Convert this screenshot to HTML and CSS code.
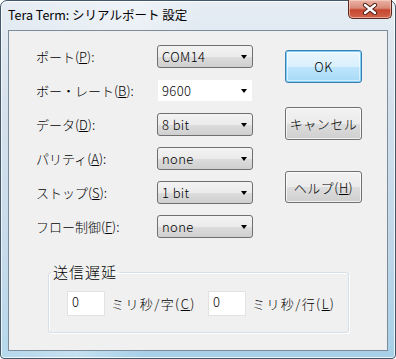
FILE: index.html
```html
<!DOCTYPE html>
<html lang="ja">
<head>
<meta charset="utf-8">
<title>Tera Term: シリアルポート 設定</title>
<link rel="stylesheet" href="styles.css">
</head>
<body>
<div class="window">
  <div class="titlebar">
    <span class="title">Tera Term: シリアルポート 設定</span>
    <div class="close">
      <svg width="16" height="12" viewBox="0 0 16 12">
        <path d="M3 2 L13 10 M13 2 L3 10" stroke="#4a1b12" stroke-width="4.2" stroke-linecap="round"/>
        <path d="M3 2 L13 10 M13 2 L3 10" stroke="#ffffff" stroke-width="2.4" stroke-linecap="round"/>
      </svg>
    </div>
  </div>
  <div class="client">
    <div class="main">
      <div class="form">
        <span class="label">ポート(<u>P</u>):</span>
        <div class="combo"><span>COM14</span><i class="arrow"></i></div>
        <span class="label">ボー・レート(<u>B</u>):</span>
        <div class="combo edit"><span>9600</span><i class="arrow"></i></div>
        <span class="label">データ(<u>D</u>):</span>
        <div class="combo"><span>8 bit</span><i class="arrow"></i></div>
        <span class="label">パリティ(<u>A</u>):</span>
        <div class="combo"><span>none</span><i class="arrow"></i></div>
        <span class="label">ストップ(<u>S</u>):</span>
        <div class="combo"><span>1 bit</span><i class="arrow"></i></div>
        <span class="label">フロー制御(<u>F</u>):</span>
        <div class="combo"><span>none</span><i class="arrow"></i></div>
      </div>
      <div class="buttons">
        <button class="btn default ok">OK</button>
        <button class="btn cancel">キャンセル</button>
        <button class="btn help">ヘルプ(<u>H</u>)</button>
      </div>
    </div>
    <fieldset class="group">
      <legend>送信遅延</legend>
      <div class="delay">
        <div class="field">0</div>
        <span class="unit unit-char">ミリ秒/字(<u>C</u>)</span>
        <div class="field">0</div>
        <span class="unit">ミリ秒/行(<u>L</u>)</span>
      </div>
    </fieldset>
  </div>
</div>
</body>
</html>
```

FILE: styles.css
```css
* { box-sizing: border-box; }
html, body { margin: 0; padding: 0; background: #ffffff; }
body {
  font-family: "Noto Sans CJK JP", "Noto Sans", sans-serif;
  font-size: 13px;
  font-weight: 300;
  color: #000;
}
.window {
  width: 396px;
  height: 359px;
  border: 1px solid #44586b;
  border-radius: 7px 7px 4px 4px;
  background:
    linear-gradient(100deg, rgba(255,255,255,0) 0%, rgba(255,255,255,.35) 30%, rgba(255,255,255,0) 45%),
    linear-gradient(180deg, #e6edf4 0%, #d3e0ec 30%, #bfd6e8 70%, #a6d0e8 100%);
  box-shadow: inset 0 0 0 1px rgba(255,255,255,.75);
  padding: 0 7px 7px;
  display: flex;
  flex-direction: column;
}
.titlebar {
  height: 29px;
  display: flex;
  justify-content: space-between;
  align-items: flex-start;
}
.title {
  font-size: 12.5px;
  line-height: 13px;
  margin-top: 7px;
  font-weight: 400;
  color: #000;
}
.close {
  width: 44px;
  height: 19px;
  margin-right: -4px;
  margin-top: -1px;
  border: 1px solid #5a2a22;
  border-top: none;
  border-radius: 0 0 5px 5px;
  background: linear-gradient(180deg, #eab2a6 0%, #d98a78 45%, #c7462f 55%, #d0654c 100%);
  box-shadow: inset 0 0 0 1px rgba(255,220,210,.55);
  display: flex;
  align-items: center;
  justify-content: center;
}
.client {
  flex: 1;
  background: #f0f0f0;
  border: 1px solid #7c8c9b;
  display: flex;
  flex-direction: column;
}
.main {
  display: flex;
  padding: 14px 0 0 27px;
}
.form {
  display: grid;
  grid-template-columns: 121px 96px;
  grid-auto-rows: 23px;
  row-gap: 11px;
  align-items: center;
}
.label { white-space: nowrap; line-height: 16px; }
.combo {
  height: 23px;
  border: 1px solid #707070;
  border-radius: 3px;
  background: linear-gradient(180deg, #f3f3f3 0%, #ebebeb 50%, #dddddd 51%, #cfcfcf 100%);
  display: flex;
  align-items: center;
  justify-content: space-between;
  padding: 0 5px 0 4px;
  line-height: 16px;
  letter-spacing: 0.4px;
}
.combo.edit {
  background: #ffffff;
  border-color: #f0f0f0;
  border-radius: 0;
}
.arrow {
  width: 0;
  height: 0;
  border-left: 3.5px solid transparent;
  border-right: 3.5px solid transparent;
  border-top: 4px solid #000;
}
.buttons {
  display: flex;
  flex-direction: column;
  margin-left: 32px;
}
.btn {
  width: 77px;
  height: 33px;
  font: inherit;
  color: #000;
  padding: 0;
  border: 1px solid #707070;
  border-radius: 3px;
  background: linear-gradient(180deg, #f2f2f2 0%, #ebebeb 50%, #dddddd 51%, #cfcfcf 100%);
  box-shadow: inset 0 0 0 1px rgba(255,255,255,.7);
  letter-spacing: 0.5px;
}
.btn.default {
  border-color: #3c7fb1;
  background: linear-gradient(180deg, #eaf6fd 0%, #d9f0fc 50%, #bee6fd 51%, #a7d9f5 100%);
  box-shadow: inset 0 0 0 1px #7fd0f4, inset 0 0 0 2px rgba(255,255,255,.5);
}
.ok { margin-top: 5px; }
.cancel { margin-top: 24px; }
.help { margin-top: 31px; height: 32px; }
.group {
  margin: 26px 0 0 39px;
  width: 301px;
  border: 1px solid #d5dfe5;
  border-radius: 3px;
  box-shadow: inset 1px 1px 0 #ffffff, 1px 1px 0 #ffffff;
  padding: 11px 0 16px 18px;
  min-width: 0;
}
.group legend {
  padding: 0 2px;
  margin-left: -16px;
  line-height: 16px;
  font-size: 15px;
  letter-spacing: 1px;
}
.delay {
  display: flex;
  align-items: center;
}
.field {
  width: 38px;
  height: 25px;
  background: #fff;
  border: 1px solid #e2e2e2;
  padding: 1px 0 0 4px;
  line-height: 18px;
}
.unit { margin-left: 6px; white-space: nowrap; letter-spacing: 1.4px; }
.unit-char { width: 97px; }
```
